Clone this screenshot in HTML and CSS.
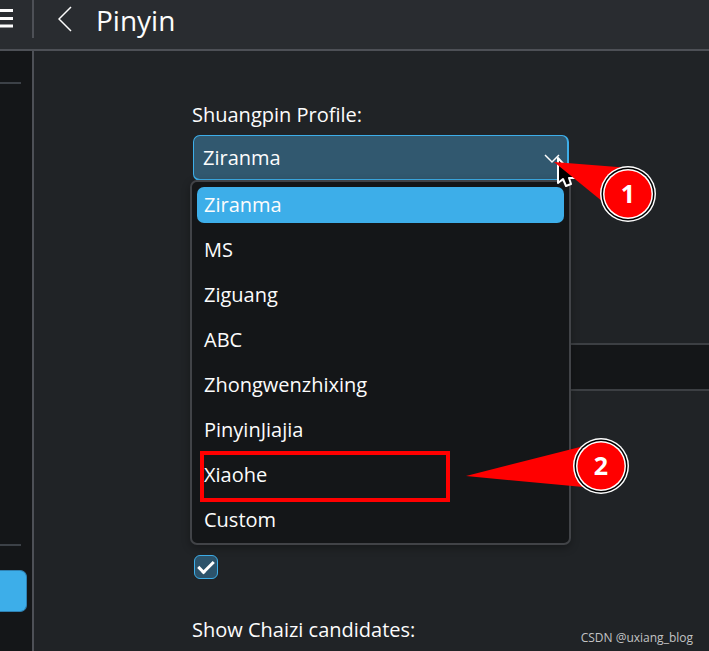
FILE: index.html
```html
<!DOCTYPE html>
<html lang="en">
<head>
    <meta charset="UTF-8">
    <meta name="viewport" content="width=device-width, initial-scale=1.0">
    <title>Pinyin</title>
    <link rel="stylesheet" href="styles.css">
</head>
<body>

<header class="header">
    <div class="header-menu">
        <button class="icon-button" type="button" aria-label="Menu">
            <svg width="13" height="20" viewBox="0 0 13 20"><path d="M0 2.5h13M0 10.5h13M0 18h13" stroke="#fcfcfc" stroke-width="3"/></svg>
        </button>
    </div>
    <button class="icon-button back-button" type="button" aria-label="Back">
        <svg width="14" height="26" viewBox="0 0 14 26"><path d="M13 1L1 13l12 12" fill="none" stroke="#fcfcfc" stroke-width="1.5"/></svg>
    </button>
    <h1 class="title">Pinyin</h1>
</header>

<div class="page">
    <nav class="sidebar">
        <hr class="sidebar-line">
        <hr class="sidebar-line">
        <div class="sidebar-current"></div>
    </nav>

    <main class="content">
        <div class="field">
            <label class="field-label" for="profile">Shuangpin Profile:</label>
            <div class="combo">
                <select class="combo-select" id="profile">
                    <option>Ziranma</option>
                </select>
                <svg class="combo-arrow" width="16" height="10" viewBox="0 0 16 10"><path d="M1 1l7 7 7-7" fill="none" stroke="#fcfcfc" stroke-width="1.5"/></svg>

                <ul class="combo-list" role="listbox" aria-label="Shuangpin Profile">
                    <li class="combo-option selected" role="option" aria-selected="true">Ziranma</li>
                    <li class="combo-option" role="option">MS</li>
                    <li class="combo-option" role="option">Ziguang</li>
                    <li class="combo-option" role="option">ABC</li>
                    <li class="combo-option" role="option">Zhongwenzhixing</li>
                    <li class="combo-option" role="option">PinyinJiajia</li>
                    <li class="combo-option marked" role="option">Xiaohe</li>
                    <li class="combo-option" role="option">Custom</li>
                </ul>

                <!-- mouse pointer -->
                <svg class="pointer" width="24" height="34" viewBox="0 0 24 34"><path d="M2 2v25l5-4 3 7 5-2-2-6h7z" fill="#000" stroke="#fff" stroke-width="2" stroke-linejoin="round"/></svg>

                <!-- step callouts -->
                <svg class="callout callout-1" width="104" height="62" viewBox="0 0 104 62">
                    <path d="M0 0l76 6-22 38z" fill="#f00"/>
                    <circle cx="74" cy="32" r="28" fill="#fff"/>
                    <circle cx="74" cy="32" r="26.5" fill="#000"/>
                    <circle cx="74" cy="32" r="25" fill="#fff"/>
                    <circle cx="74" cy="32" r="23.5" fill="#f00"/>
                    <text class="callout-number" x="74" y="41">1</text>
                </svg>
                <svg class="callout callout-2" width="164" height="58" viewBox="0 0 164 58">
                    <path d="M0 39l122-31 6 43z" fill="#f00"/>
                    <circle cx="135" cy="29" r="28" fill="#fff"/>
                    <circle cx="135" cy="29" r="26.5" fill="#000"/>
                    <circle cx="135" cy="29" r="25" fill="#fff"/>
                    <circle cx="135" cy="29" r="23.5" fill="#f00"/>
                    <text class="callout-number" x="135" y="38">2</text>
                </svg>
            </div>
        </div>

        <input class="text-input" type="text" aria-label="Value">

        <input class="checkbox" type="checkbox" aria-label="Enabled" checked>

        <p class="field-label">Show Chaizi candidates:</p>
    </main>
</div>

<div class="watermark">CSDN @uxiang_blog</div>

</body>
</html>
```
FILE: styles.css
```css
*,
*::before,
*::after {
    box-sizing: border-box;
}

body {
    margin: 0;
    height: 100vh;
    display: flex;
    flex-direction: column;
    overflow: hidden;
    background-color: #202326;
    color: #fcfcfc;
    font-family: "Open Sans", "Noto Sans", sans-serif;
    font-size: 20px;
    line-height: 28px;
}

/* Top bar */
.header {
    display: flex;
    align-items: flex-start;
    height: 51px;
    flex-shrink: 0;
    background-color: #292c30;
    border-bottom: 2px solid #4d5056;
}

.header-menu {
    width: 34px;
    height: 38px;
    padding-top: 8px;
    border-right: 2px solid #4d5056;
}

.icon-button {
    display: block;
    padding: 0;
    border: none;
    background: none;
}

.icon-button svg {
    display: block;
}

.back-button {
    margin: 6px 24px 0;
}

.title {
    margin: 0;
    font-size: 28px;
    font-weight: 400;
    line-height: 40px;
}

.page {
    display: flex;
    flex: 1;
    min-height: 0;
}

/* Left column */
.sidebar {
    display: flex;
    flex-direction: column;
    flex-shrink: 0;
    width: 34px;
    padding-top: 31px;
    background-color: #141618;
    border-right: 2px solid #4d5056;
}

.sidebar-line {
    width: 21px;
    height: 2px;
    margin: 0 0 460px;
    border: none;
    background-color: #3c4147;
}

.sidebar-line + .sidebar-line {
    margin-bottom: 24px;
}

.sidebar-current {
    width: 27px;
    height: 42px;
    border: 1px solid #2f81b2;
    border-left: none;
    border-radius: 0 7px 7px 0;
    background-color: #3daee9;
}

/* Settings form */
.content {
    display: flex;
    flex-direction: column;
    flex: 1;
    padding: 50px 0 0 158px;
}

.field-label {
    display: block;
    margin: 0;
}

.combo {
    position: relative;
    width: 376px;
    margin: 6px 0 0 1px;
}

.combo-select {
    display: block;
    width: 100%;
    height: 46px;
    padding: 1px 9px 0;
    appearance: none;
    border: 2px solid #3daee9;
    border-width: 1px 2px 2px 1px;
    border-radius: 7px;
    background-color: #31586f;
    color: #fcfcfc;
    font: inherit;
}

.combo-arrow {
    position: absolute;
    top: 19px;
    right: 9px;
}

.combo-list {
    position: absolute;
    top: 45px;
    left: -3px;
    width: 381px;
    display: flex;
    flex-direction: column;
    gap: 9px;
    margin: 0;
    padding: 5px;
    border: 2px solid #414347;
    border-radius: 7px;
    background-color: #141618;
    box-shadow: 0 3px 8px rgba(0, 0, 0, 0.3);
    list-style: none;
}

.combo-option {
    height: 36px;
    padding: 0 7px;
    border-radius: 7px;
    line-height: 36px;
}

.combo-option.selected {
    background-color: #3daee9;
}

.combo-option.marked {
    position: relative;
}

/* Red frame round the wanted profile */
.combo-option.marked::after {
    content: "";
    position: absolute;
    top: -6px;
    left: 3px;
    width: 250px;
    height: 51px;
    border: 4px solid #f00;
}

.pointer {
    position: absolute;
    top: 21px;
    left: 363px;
}

.callout {
    position: absolute;
}

.callout-1 {
    top: 27px;
    left: 361px;
}

.callout-2 {
    top: 302px;
    left: 273px;
}

.callout-number {
    fill: #fff;
    font-family: "Open Sans", sans-serif;
    font-size: 25px;
    font-weight: 700;
    text-anchor: middle;
}

.text-input {
    height: 48px;
    margin-top: 162px;
    border: 2px solid #3c3f43;
    border-right: none;
    border-radius: 7px 0 0 7px;
    background-color: #141618;
    color: #fcfcfc;
    font: inherit;
}

.checkbox {
    width: 24px;
    height: 24px;
    margin: 164px 0 37px 2px;
    display: grid;
    place-items: center;
    appearance: none;
    border: 1px solid #3daee9;
    border-radius: 6px;
    background-color: #2c536b;
}

.checkbox:checked::before {
    content: "";
    width: 16px;
    height: 9px;
    margin-bottom: 4px;
    border: solid #fff;
    border-width: 0 0 3px 3px;
    transform: rotate(-45deg);
}

.watermark {
    position: absolute;
    right: 16px;
    bottom: 4px;
    color: #c3c4c5;
    font-size: 12px;
    line-height: 18px;
}
```
